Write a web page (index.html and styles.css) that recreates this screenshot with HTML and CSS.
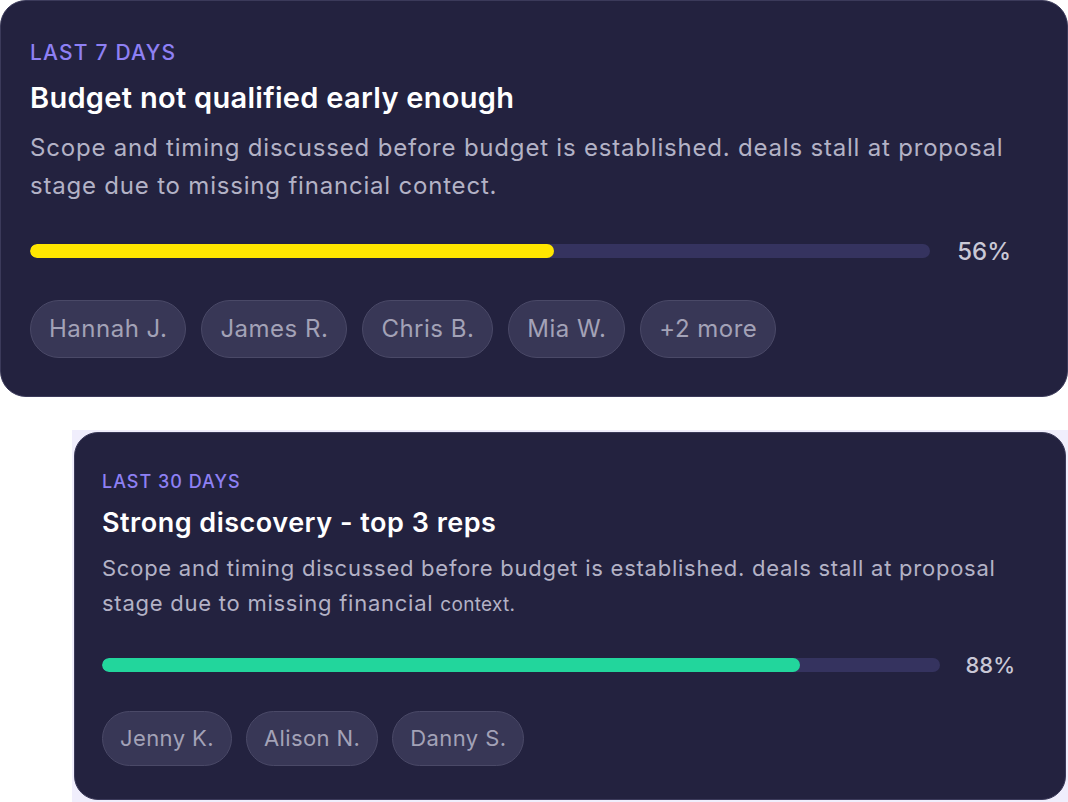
FILE: index.html
```html
<!DOCTYPE html>
<html lang="en">
<head>
    <meta charset="UTF-8">
    <meta name="viewport" content="width=device-width, initial-scale=1.0">
    <title>Deal Insights</title>
    <link rel="stylesheet" href="styles.css">
</head>
<body>
    <div class="page">
        <!-- Weekly insight -->
        <div class="card">
            <div class="card-label">LAST 7 DAYS</div>
            <h2 class="card-title">Budget not qualified early enough</h2>
            <p class="card-text">Scope and timing discussed before budget is established. deals stall at proposal stage due to missing financial contect.</p>
            <div class="progress-row">
                <div class="progress">
                    <div class="progress-fill fill-yellow" style="width: 58.2%;"></div>
                </div>
                <span class="progress-value">56%</span>
            </div>
            <div class="chips">
                <span class="chip">Hannah J.</span>
                <span class="chip">James R.</span>
                <span class="chip">Chris B.</span>
                <span class="chip">Mia W.</span>
                <span class="chip">+2 more</span>
            </div>
        </div>

        <!-- Monthly insight -->
        <div class="card-wrap">
            <div class="card card-small">
                <div class="card-label">LAST 30 DAYS</div>
                <h2 class="card-title">Strong discovery - top 3 reps</h2>
                <p class="card-text">Scope and timing discussed before budget is established. deals stall at proposal stage due to missing financial <span class="text-small">context.</span></p>
                <div class="progress-row">
                    <div class="progress">
                        <div class="progress-fill fill-green" style="width: 83.3%;"></div>
                    </div>
                    <span class="progress-value">88%</span>
                </div>
                <div class="chips">
                    <span class="chip">Jenny K.</span>
                    <span class="chip">Alison N.</span>
                    <span class="chip">Danny S.</span>
                </div>
            </div>
        </div>
    </div>
</body>
</html>
```

FILE: styles.css
```css
body {
    margin: 0;
    background: #ffffff;
    font-family: Inter, 'Noto Sans', sans-serif;
}

.page {
    width: 1068px;
    display: flex;
    flex-direction: column;
    gap: 33px;
}

.card {
    background: #23223f;
    border: 1px solid #3b3a5a;
    border-radius: 26px;
    padding: 39px 30px 38px 29px;
    color: #ffffff;
    display: flex;
    flex-direction: column;
}

.card-label {
    font-size: 21px;
    line-height: 26px;
    font-weight: 500;
    letter-spacing: 1.2px;
    color: #8e80f4;
}

.card-title {
    margin: 15px 0 0;
    font-size: 29px;
    line-height: 34px;
    font-weight: 600;
    letter-spacing: 0.3px;
    color: #ffffff;
}

.card-text {
    margin: 14px 0 0;
    font-size: 24px;
    line-height: 38px;
    letter-spacing: 0.8px;
    color: #b3b2c6;
}

.progress-row {
    margin-top: 32px;
    padding-right: 26px;
    display: flex;
    align-items: center;
    gap: 27px;
    height: 28px;
}

.progress {
    flex: 1;
    height: 14px;
    border-radius: 7px;
    background: #35335f;
    overflow: hidden;
}

.progress-fill {
    height: 100%;
    border-radius: 7px;
}

.fill-yellow {
    background: #ffe600;
}

.fill-green {
    background: #22d69c;
}

.progress-value {
    font-size: 24px;
    font-weight: 500;
    color: #c9c8d6;
}

.chips {
    margin-top: 35px;
    display: flex;
    gap: 15px;
}

.chip {
    padding: 13px 18px;
    font-size: 24px;
    line-height: 30px;
    letter-spacing: 0.5px;
    color: #a3a2b7;
    background: #383756;
    border: 1px solid #4a4967;
    border-radius: 29px;
}

/* second card sits on a tinted panel */
.card-wrap {
    margin-left: 72px;
    padding: 2px;
    background: #f0eefc;
}

.card-small {
    padding: 38px 28px 33px 27px;
    border-radius: 24px;
}

.card-small .card-label {
    font-size: 18px;
    line-height: 22px;
    letter-spacing: 1px;
}

.card-small .card-title {
    font-size: 27px;
    line-height: 30px;
    letter-spacing: 0.5px;
}

.card-small .card-text {
    margin-top: 13px;
    font-size: 22px;
    line-height: 35px;
    letter-spacing: 0.75px;
}

.text-small {
    font-size: 19px;
    letter-spacing: 0.3px;
}

.card-small .progress-row {
    margin-top: 30px;
    padding-right: 22px;
    gap: 25px;
    height: 26px;
}

.card-small .progress-value {
    font-size: 22px;
}

.card-small .chips {
    margin-top: 33px;
    gap: 14px;
}

.card-small .chip {
    padding: 12px 17px;
    font-size: 22px;
    line-height: 29px;
    letter-spacing: 0.4px;
    border-radius: 28px;
}
```
